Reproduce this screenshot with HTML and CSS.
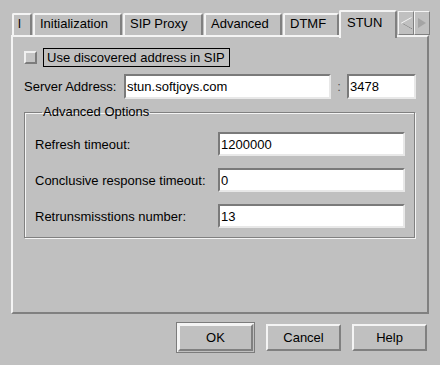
FILE: index.html
```html
<!DOCTYPE html>
<html lang="en">
<head>
  <meta charset="UTF-8">
  <title>STUN Settings</title>
  <link rel="stylesheet" href="styles.css">
</head>
<body>
<div class="dialog">
  <div class="tabs">
    <div class="tab tab-cut">l</div>
    <div class="tab w-init">Initialization</div>
    <div class="tab w-proxy">SIP Proxy</div>
    <div class="tab w-adv">Advanced</div>
    <div class="tab w-dtmf">DTMF</div>
    <div class="tab active">STUN</div>
    <div class="tab-scroll">
      <span class="arrow-btn">
        <svg width="13" height="14" viewBox="0 0 13 14"><path d="M11.5 1.5 L1.5 7 L11.5 12.5" fill="none" stroke="#f4f4f4" stroke-width="1"/><path d="M2.5 7.5 L12 12.8" stroke="#8a8a8a" stroke-width="1"/></svg>
      </span>
      <span class="arrow-btn">
        <svg width="10" height="12" viewBox="0 0 10 12"><path d="M1 1 L9 6 L1 11 Z" fill="#a4a4a4"/></svg>
      </span>
    </div>
  </div>

  <div class="panel">
    <div class="check-row">
      <span class="checkbox"></span>
      <span class="check-label">Use discovered address in SIP</span>
    </div>

    <div class="server-row">
      <span class="server-label">Server Address:</span>
      <input class="field server-field" type="text" value="stun.softjoys.com">
      <span class="colon">:</span>
      <input class="field port-field" type="text" value="3478">
    </div>

    <fieldset class="group">
      <legend>Advanced Options</legend>
      <div class="opt-row">
        <label>Refresh timeout:</label>
        <input class="field opt-field" type="text" value="1200000">
      </div>
      <div class="opt-row">
        <label>Conclusive response timeout:</label>
        <input class="field opt-field" type="text" value="0">
      </div>
      <div class="opt-row">
        <label>Retrunsmisstions number:</label>
        <input class="field opt-field" type="text" value="13">
      </div>
    </fieldset>
  </div>

  <div class="buttons">
    <div class="default-frame"><button class="btn">OK</button></div>
    <button class="btn">Cancel</button>
    <button class="btn">Help</button>
  </div>
</div>
</body>
</html>
```

FILE: styles.css
```css
/* Motif-like dialog look */
* {
  box-sizing: border-box;
  margin: 0;
  padding: 0;
}

body {
  background: #c0c0c0;
  color: #000;
  font-family: "Liberation Sans", Arial, sans-serif;
  font-size: 13px;
}

.dialog {
  width: 440px;
  height: 365px;
  overflow: hidden;
}

/* Tab strip */
.tabs {
  display: flex;
  align-items: flex-end;
  gap: 1px;
  height: 25px;
  margin-top: 10px;
  padding-left: 12px;
}

.tab {
  height: 22px;
  padding: 0 0 0 5px;
  line-height: 18px;
  white-space: nowrap;
  overflow: hidden;
  border-top: 2px solid #f4f4f4;
  border-left: 2px solid #f4f4f4;
  border-right: 2px solid #808080;
  border-top-left-radius: 2px;
  border-top-right-radius: 2px;
}

.tab-cut { width: 20px; padding-left: 4px; }
.w-init { width: 89px; }
.w-proxy { width: 80px; }
.w-adv { width: 78px; }
.w-dtmf { width: 56px; }

.tab.active {
  width: 58px;
  height: 28px;
  margin-left: -1px;
  margin-bottom: -3px;
  padding-top: 2px;
  padding-left: 6px;
  background: #c0c0c0;
  position: relative;
  z-index: 1;
}

.tab-scroll {
  display: flex;
  align-self: flex-start;
  margin-top: 1px;
}

.arrow-btn {
  display: flex;
  align-items: center;
  justify-content: center;
  width: 16px;
  height: 24px;
  border-top: 1px solid #f4f4f4;
  border-left: 1px solid #f4f4f4;
  border-right: 1px solid #808080;
  border-bottom: 1px solid #808080;
}

/* Page body */
.panel {
  width: 418px;
  height: 279px;
  margin-left: 11px;
  padding: 11px 0 0 11px;
  border-top: 2px solid #f4f4f4;
  border-left: 2px solid #f4f4f4;
  border-right: 2px solid #808080;
  border-bottom: 2px solid #808080;
}

.check-row {
  display: flex;
  align-items: center;
  gap: 6px;
  height: 19px;
}

.checkbox {
  width: 13px;
  height: 13px;
  border-top: 2px solid #f0f0f0;
  border-left: 2px solid #f0f0f0;
  border-right: 2px solid #7c7c7c;
  border-bottom: 2px solid #7c7c7c;
  background: #c4c4c4;
}

.check-label {
  width: 187px;
  height: 19px;
  line-height: 17px;
  padding-left: 3px;
  border: 1px solid #000;
}

.server-row {
  display: flex;
  align-items: center;
  height: 25px;
  margin-top: 7px;
}

.server-label { width: 100px; }

.field {
  height: 25px;
  padding: 0 0 0 1px;
  font: 13px "Liberation Sans", Arial, sans-serif;
  color: #000;
  background: #fff;
  border-top: 2px solid #7a7a7a;
  border-left: 2px solid #7a7a7a;
  border-right: 2px solid #e8e8e8;
  border-bottom: 2px solid #e8e8e8;
  outline: none;
}

.server-field { width: 207px; }

.colon {
  width: 16px;
  text-align: center;
  color: #555;
}

.port-field { width: 69px; }

/* Advanced Options group */
.group {
  width: 391px;
  margin-top: 5px;
  padding: 12px 9px 9px 10px;
  border: 1px solid #808080;
  box-shadow: 1px 1px 0 #f4f4f4, inset 1px 1px 0 #f4f4f4;
}

.group legend {
  margin-left: 7px;
  padding: 0 1px;
  line-height: 16px;
}

.opt-row {
  display: flex;
  align-items: center;
  height: 24px;
  margin-top: 12px;
}

.opt-row:first-of-type { margin-top: 0; }

.opt-row label { width: 183px; }

.opt-field {
  width: 187px;
  height: 24px;
}

/* Buttons */
.buttons {
  display: flex;
  align-items: center;
  justify-content: flex-end;
  gap: 11px;
  margin-top: 8px;
  padding-right: 13px;
}

.default-frame {
  padding: 1px;
  border: 1px solid #7c7c7c;
  box-shadow: inset 1px 1px 0 #f4f4f4;
}

.btn {
  width: 75px;
  height: 27px;
  font: 13px "Liberation Sans", Arial, sans-serif;
  color: #000;
  background: #c0c0c0;
  border-top: 2px solid #f4f4f4;
  border-left: 2px solid #f4f4f4;
  border-right: 2px solid #808080;
  border-bottom: 2px solid #808080;
  display: block;
}
```
